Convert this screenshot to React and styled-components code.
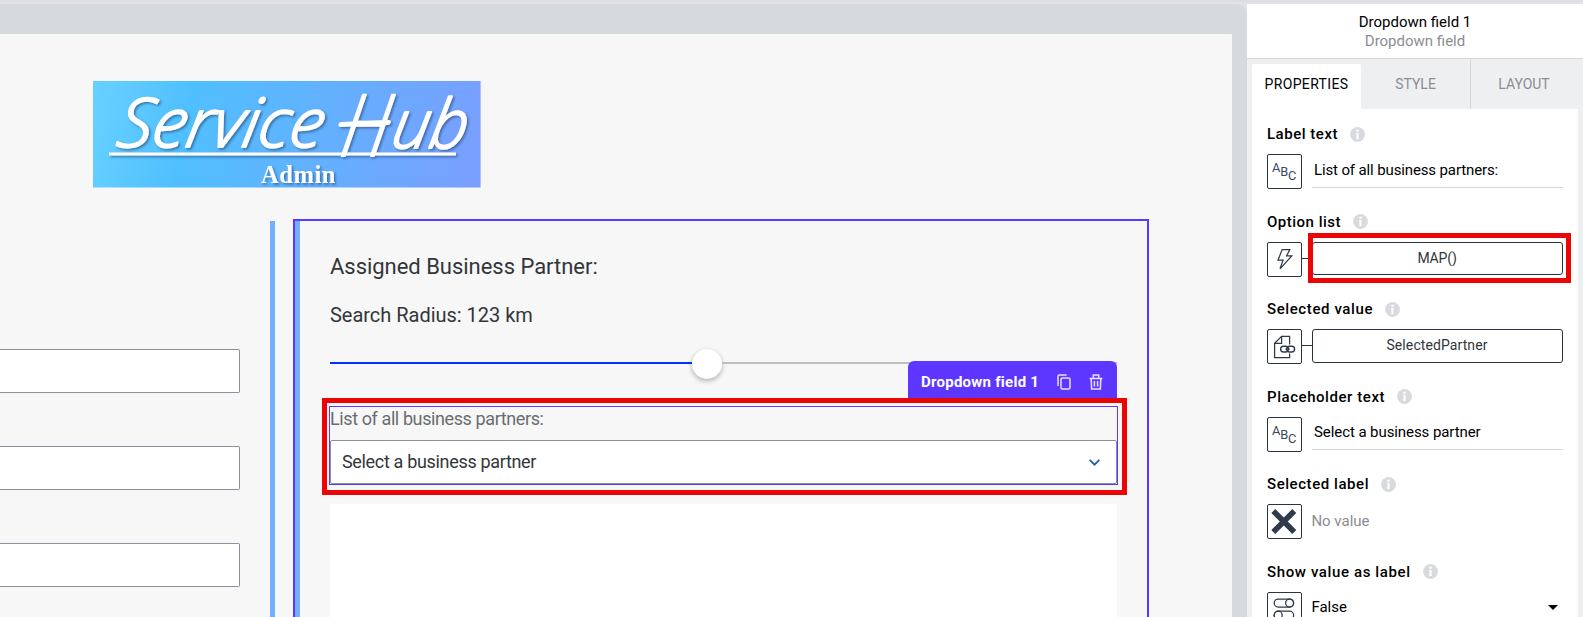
import React from "react";
import styled, { createGlobalStyle } from "styled-components";

const GlobalStyle = createGlobalStyle`
  *, *::before, *::after { box-sizing: border-box; }
  html, body { margin: 0; overflow: hidden; }
  body { font-family: Roboto, "Liberation Sans", sans-serif; background: #e1e2e7; }
`;

const Shell = styled.div`
  display: flex;
  width: 1583px;
  height: 617px;
  padding-top: 4px;
  overflow: hidden;
  background: linear-gradient(#dbdbe1 0, #e2e3e8 3px);
`;

/* ---------- canvas ---------- */

const Stage = styled.main`
  width: 1247px;
  padding: 30px 15px 0 0;
  background: #d5dadd;
  border-top-right-radius: 10px;
`;

const Page = styled.div`
  height: 583px;
  padding-top: 47px;
  background: #f7f7f7;
  border-top-right-radius: 1px;
  overflow: hidden;
`;

const Logo = styled.svg`
  display: block;
  width: 388px;
  height: 107px;
  margin-left: 93px;
  overflow: visible;
`;

const Columns = styled.div`
  display: flex;
  align-items: flex-start;
  margin-top: 31px;
`;

const FormColumn = styled.section`
  display: flex;
  flex-direction: column;
  gap: 53px;
  width: 240px;
  padding-top: 130px;
`;

const TextBox = styled.div`
  height: 44px;
  border: 1px solid #89919a;
  border-left: 0;
  border-radius: 0 2px 2px 0;
  background: #fff;
`;

const Divider = styled.div`
  width: 5px;
  height: 420px;
  margin: 2px 18px 0 30px;
  background: #74afff;
`;

const PartnerCard = styled.section`
  width: 856px;
  height: 420px;
  border: 2px solid #5d36ff;
  border-bottom: 0;
  box-shadow: inset 5px 0 #74afff;
  padding: 33px 30px 0 35px;
`;

const Heading = styled.h2`
  margin: 0;
  font-size: 22px;
  font-weight: 400;
  line-height: 26px;
  letter-spacing: -0.03px;
  color: #32363a;
`;

const Radius = styled.p`
  margin: 23px 0 0;
  font-size: 20px;
  line-height: 24px;
  letter-spacing: -0.02px;
  color: #32363a;
`;

const Slider = styled.div`
  display: flex;
  align-items: center;
  height: 30px;
  margin-top: 22px;
`;

const Track = styled.div`
  width: ${(p) => p.$width}px;
  height: 2px;
  margin-bottom: 2px;
  background: ${(p) => (p.$filled ? "#0032fa" : "#bfbfbf")};
`;

const Thumb = styled.div`
  width: 30px;
  height: 30px;
  border-radius: 50%;
  background: #fff;
  box-shadow: 0 2px 5px rgba(0, 0, 0, 0.3);
`;

const Selection = styled.div`
  position: relative;
  width: 805px;
  height: 97px;
  margin: 19px 0 0 -8px;
  padding: 3px 4px 5px 2px;
  border: 5px solid #eb0505;
`;

const SelectionTag = styled.div`
  position: absolute;
  right: 5px;
  bottom: 92px;
  display: flex;
  align-items: center;
  width: 209px;
  height: 37px;
  padding: 4px 13px 0 13px;
  border-radius: 6px 6px 0 0;
  background: #5d36ff;
  color: #fff;
  font-size: 15px;
  font-weight: 700;
  letter-spacing: 0.25px;
  white-space: nowrap;
`;

const TagIcon = styled.svg`
  flex: none;
  width: 14px;
  height: 16px;
  margin-left: ${(p) => p.$gap}px;
  fill: none;
  stroke: #e8e1ff;
  stroke-width: 1.5;
`;

const Dropdown = styled.div`
  height: 79px;
  border: 1px solid #5d36ff;
`;

const DropdownLabel = styled.div`
  height: 33px;
  font-size: 18px;
  line-height: 24px;
  letter-spacing: -0.4px;
  color: #6a6d70;
`;

const DropdownInput = styled.div`
  display: flex;
  align-items: center;
  justify-content: space-between;
  height: 44px;
  padding: 0 16px 2px 11px;
  border: 1px solid #89919a;
  border-radius: 2px;
  background: #fff;
  color: #32363a;
  font-size: 18px;
  letter-spacing: -0.33px;
`;

const Chevron = styled.svg`
  width: 11px;
  height: 7px;
  margin-top: 2px;
  fill: none;
  stroke: #2460a8;
  stroke-width: 1.8;
`;

const ListArea = styled.div`
  width: 787px;
  height: 130px;
  margin-top: 9px;
  background: #fff;
`;

/* ---------- inspector ---------- */

const Inspector = styled.aside`
  width: 336px;
  background: #eeeff1;
`;

const InspectorHead = styled.header`
  height: 55px;
  padding-top: 9px;
  border-bottom: 1px solid #d5d7da;
  background: #fff;
  text-align: center;
  font-size: 15px;
  line-height: 19px;
  color: #000;
`;

const Muted = styled.div`
  color: #8b8d92;
`;

const Tabs = styled.nav`
  display: flex;
  height: 50px;
  padding-left: 5px;
`;

const Tab = styled.div`
  display: flex;
  align-items: center;
  justify-content: center;
  width: ${(p) => p.$width}px;
  height: ${(p) => (p.$active ? 45 : 50)}px;
  margin-top: ${(p) => (p.$active ? 5 : 0)}px;
  padding-right: ${(p) => p.$inset || 0}px;
  padding-bottom: ${(p) => (p.$active ? 6 : 1)}px;
  border-left: ${(p) => (p.$divided ? "1px solid #d5d7da" : "0")};
  border-radius: 2px 2px 0 0;
  background: ${(p) => (p.$active ? "#fff" : "transparent")};
  color: ${(p) => (p.$active ? "#000" : "#8b8d92")};
  font-size: 14px;
  letter-spacing: ${(p) => p.$track || 0}px;
`;

const Body = styled.div`
  width: 326px;
  height: 510px;
  margin-left: 5px;
  padding: 14px 15px 0;
  background: #fff;
`;

const Field = styled.div`
  height: 87.5px;
`;

const FieldTitle = styled.div`
  display: flex;
  align-items: center;
  height: 22px;
  font-size: 15px;
  font-weight: 500;
  letter-spacing: ${(p) => p.$track}px;
  white-space: nowrap;
  color: #000;
`;

const InfoIcon = styled.svg`
  width: 15px;
  height: 15px;
  margin-left: 12.4px;
`;

const FieldRow = styled.div`
  display: flex;
  height: 35px;
  margin-top: 9px;
`;

const TypeBox = styled.div`
  display: flex;
  align-items: center;
  justify-content: center;
  width: 35px;
  height: 35px;
  border: 1px solid #2b3442;
  border-radius: 2px;
`;

const TypeIcon = styled.svg`
  width: 33px;
  height: 33px;
  fill: none;
  stroke: #2f3a4a;
  stroke-width: 1.25;
`;

const GlyphText = styled.text`
  fill: #3d4758;
  stroke: none;
  font-size: 12.8px;
`;

const TextValue = styled.div`
  width: 251px;
  height: ${(p) => p.$height || 34}px;
  margin-left: 10px;
  padding-left: 2px;
  border-bottom: 1px solid #d5d7da;
  font-size: 15px;
  line-height: ${(p) => (p.$height ? 30 : 32)}px;
  letter-spacing: ${(p) => p.$track}px;
  color: #000;
`;

const Connector = styled.div`
  width: 10px;
  height: 1px;
  margin-top: 16px;
  background: #2b3442;
`;

const Binding = styled.div`
  position: relative;
  display: flex;
  align-items: center;
  justify-content: center;
  width: 251px;
  height: ${(p) => p.$height}px;
  padding: 0 1px ${(p) => (p.$height > 33 ? 2 : 1)}px 0;
  border: 1px solid #2b3442;
  border-radius: 3px;
  font-size: 14px;
  letter-spacing: ${(p) => p.$track}px;
  color: #32363a;
`;

const Highlight = styled.div`
  position: absolute;
  inset: -10px -9px -9px -5px;
  border: 5px solid #eb0505;
`;

const PlainValue = styled.div`
  flex: 1;
  margin-left: 9.4px;
  font-size: 15px;
  line-height: ${(p) => p.$line}px;
  color: ${(p) => (p.$muted ? "#8b8d92" : "#000")};
`;

const Caret = styled.svg`
  width: 10px;
  height: 5px;
  margin: 13px 5px 0 0;
`;

const Info = () => (
  <InfoIcon viewBox="0 0 15 15">
    <circle cx="7.5" cy="7.5" r="7.4" fill="#d8dade" />
    <circle cx="7.5" cy="3.8" r="1.3" fill="#fff" />
    <path d="M7.5 6v5.8" fill="none" stroke="#fff" strokeWidth="2.1" />
    <path d="M6 6.4h1.5M6 11.4h3" fill="none" stroke="#fff" strokeWidth="0.8" />
  </InfoIcon>
);

const AbcIcon = () => (
  <TypeIcon viewBox="0 0 33 33">
    <GlyphText x="4" y="17">A</GlyphText>
    <GlyphText x="12.3" y="21">B</GlyphText>
    <GlyphText x="20" y="25">C</GlyphText>
  </TypeIcon>
);

const BoltIcon = () => (
  <TypeIcon viewBox="0 0 33 33">
    <path d="M14.2 6.6h7.6l-3.2 6.3h5.2L12 25.8l3.1-8.7H10z" />
  </TypeIcon>
);

const LinkedFileIcon = () => (
  <TypeIcon viewBox="0 0 33 33">
    <path d="M21.6 14.5V6.4h-8L6.6 13.3v14.2h15v-4M13.6 6.4v6.9h-7" />
    <rect x="12.6" y="16.2" width="7.8" height="5.8" rx="2.9" strokeWidth="1.4" />
    <rect x="18.8" y="16.2" width="7.8" height="5.8" rx="2.9" strokeWidth="1.4" />
    <path d="M17.4 19.1h4.4" />
  </TypeIcon>
);

const CrossIcon = () => (
  <TypeIcon viewBox="0 0 33 33">
    <path d="M5.3 5.9l21 21M26.3 5.9l-21 21" strokeWidth="5.6" />
  </TypeIcon>
);

const ToggleIcon = () => (
  <TypeIcon viewBox="0 0 33 33">
    <rect x="6.2" y="6" width="19.4" height="8" rx="4" />
    <circle cx="21.6" cy="10" r="4" />
    <rect x="6.2" y="18.2" width="19.4" height="8" rx="4" />
    <circle cx="10.2" cy="22.2" r="4" />
  </TypeIcon>
);

function Property({ title, track, icon, children }) {
  return (
    <Field>
      <FieldTitle $track={track}>
        {title}
        <Info />
      </FieldTitle>
      <FieldRow>
        <TypeBox>{icon}</TypeBox>
        {children}
      </FieldRow>
    </Field>
  );
}

function ServiceLogo() {
  return (
    <Logo viewBox="0 0 388 107">
      <defs>
        <linearGradient id="sky" gradientUnits="userSpaceOnUse" x1="0" y1="20" x2="380" y2="100">
          <stop offset="0" stopColor="#66d0ff" />
          <stop offset="0.25" stopColor="#50bfff" />
          <stop offset="1" stopColor="#799fff" />
        </linearGradient>
        <filter id="drop" x="-5%" y="-10%" width="112%" height="130%">
          <feDropShadow dx="1.6" dy="1.6" stdDeviation="1" floodColor="#1c3f70" floodOpacity="0.6" />
        </filter>
      </defs>
      <rect width="387.6" height="106.5" fill="url(#sky)" />
      <g filter="url(#drop)" fill="#fff">
        <g
          transform="translate(0 66) skewX(-10)"
          fontFamily='"Open Sans", sans-serif'
          fontStyle="italic"
          fontWeight="300"
          fontSize="68"
          stroke="#fff"
          strokeWidth="2"
          strokeLinejoin="round"
          strokeLinecap="round"
        >
          <text x="22" y="0" textLength="206" lengthAdjust="spacingAndGlyphs">Service</text>
          <text x="247" y="9" fontSize="86" textLength="46" lengthAdjust="spacingAndGlyphs">H</text>
          <path d="M244 -22.6L291 -24.6" strokeWidth="5" />
          <text x="297" y="1" textLength="75" lengthAdjust="spacingAndGlyphs">ub</text>
        </g>
        <rect x="16" y="71.5" width="347" height="3" />
        <text
          x="168"
          y="101.5"
          textLength="74.5"
          fontFamily='"Liberation Serif", serif'
          fontWeight="700"
          fontSize="24.5"
        >
          Admin
        </text>
      </g>
    </Logo>
  );
}

export default function App() {
  return (
    <>
      <GlobalStyle />
      <Shell>
        <Stage>
          <Page>
            <ServiceLogo />
            <Columns>
              <FormColumn>
                <TextBox />
                <TextBox />
                <TextBox />
              </FormColumn>
              <Divider />
              <PartnerCard>
                <Heading>Assigned Business Partner:</Heading>
                <Radius>Search Radius: 123 km</Radius>
                <Slider>
                  <Track $width={362} $filled />
                  <Thumb />
                  <Track $width={395} />
                </Slider>
                <Selection>
                  <SelectionTag>
                    Dropdown field 1
                    <TagIcon viewBox="0 0 14 16" $gap={18}>
                      <path d="M1 12V2.2Q1 1 2.2 1H9.6" />
                      <rect x="4" y="4" width="9" height="11" rx="1.6" />
                    </TagIcon>
                    <TagIcon viewBox="0 0 14 16" $gap={18}>
                      <path d="M0.6 4.4h12.8M4.3 4.2V1h5.4v3.2M2.2 4.6l.4 10.4h8.8l.4-10.4M5.4 7v5.6M8.6 7v5.6" />
                    </TagIcon>
                  </SelectionTag>
                  <Dropdown>
                    <DropdownLabel>List of all business partners:</DropdownLabel>
                    <DropdownInput>
                      Select a business partner
                      <Chevron viewBox="0 0 11 7">
                        <path d="M0.6 0.8l4.9 4.9 4.9-4.9" />
                      </Chevron>
                    </DropdownInput>
                  </Dropdown>
                </Selection>
                <ListArea />
              </PartnerCard>
            </Columns>
          </Page>
        </Stage>
        <Inspector>
          <InspectorHead>
            <div>Dropdown field 1</div>
            <Muted>Dropdown field</Muted>
          </InspectorHead>
          <Tabs>
            <Tab $active $width={109} $track={0.36}>PROPERTIES</Tab>
            <Tab $width={109}>STYLE</Tab>
            <Tab $width={113} $divided $inset={6}>LAYOUT</Tab>
          </Tabs>
          <Body>
            <Property title="Label text" track={0.52} icon={<AbcIcon />}>
              <TextValue $track={-0.13}>List of all business partners:</TextValue>
            </Property>
            <Property title="Option list" track={0.5} icon={<BoltIcon />}>
              <Connector />
              <Binding $height={33} $track={-0.15}>
                MAP()
                <Highlight />
              </Binding>
            </Property>
            <Property title="Selected value" track={0.6} icon={<LinkedFileIcon />}>
              <Connector />
              <Binding $height={34} $track={0.09}>SelectedPartner</Binding>
            </Property>
            <Property title="Placeholder text" track={0.56} icon={<AbcIcon />}>
              <TextValue $height={33} $track={-0.08}>Select a business partner</TextValue>
            </Property>
            <Property title="Selected label" track={0.56} icon={<CrossIcon />}>
              <PlainValue $muted $line={34}>No value</PlainValue>
            </Property>
            <Property title="Show value as label" track={0.62} icon={<ToggleIcon />}>
              <PlainValue $line={30}>False</PlainValue>
              <Caret viewBox="0 0 10 5">
                <path d="M0 0h10L5 5z" />
              </Caret>
            </Property>
          </Body>
        </Inspector>
      </Shell>
    </>
  );
}
